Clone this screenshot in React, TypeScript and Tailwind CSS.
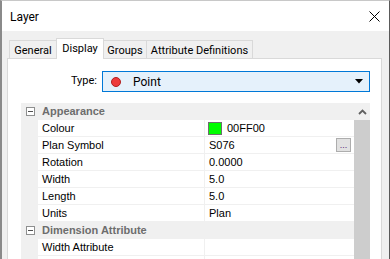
import React from 'react';

type Row =
    | { kind: 'header'; label: string }
    | { kind: 'prop'; label: string; value?: string; swatch?: string; button?: boolean };

const rows: Row[] = [
    { kind: 'header', label: 'Appearance' },
    { kind: 'prop', label: 'Colour', value: '00FF00', swatch: '#00ff00' },
    { kind: 'prop', label: 'Plan Symbol', value: 'S076', button: true },
    { kind: 'prop', label: 'Rotation', value: '0.0000' },
    { kind: 'prop', label: 'Width', value: '5.0' },
    { kind: 'prop', label: 'Length', value: '5.0' },
    { kind: 'prop', label: 'Units', value: 'Plan' },
    { kind: 'header', label: 'Dimension Attribute' },
    { kind: 'prop', label: 'Width Attribute' },
    { kind: 'prop', label: '' },
];

const tabs = [
    { name: 'General', w: 'w-[48px]' },
    { name: 'Display', w: 'w-[48px]' },
    { name: 'Groups', w: 'w-[44px]' },
    { name: 'Attribute Definitions', w: 'w-[107px]' },
];

const MinusBox: React.FC = () => (
    <div className="w-[9px] h-[9px] border border-[#8e8f8f] bg-white flex items-center justify-center">
        <div className="w-[5px] h-px bg-[#505050]" />
    </div>
);

const PropertyGrid: React.FC = () => (
    <div className="flex ml-[13px] mt-[11px] w-[349px]">
        <div className="w-[333px] flex flex-col">
            {rows.map((row, i) =>
                row.kind === 'header' ? (
                    <div key={i} className="h-[17px] flex items-center bg-[#f0f0f0]">
                        <div className="w-[17px] pl-[5px] flex items-center">
                            <MinusBox />
                        </div>
                        <span className="pl-[4px] text-[11px] font-bold text-[#6d6d6d] font-['Liberation_Sans',sans-serif]">
                            {row.label}
                        </span>
                    </div>
                ) : (
                    <div key={i} className="h-[17px] flex">
                        <div className="w-[17px] bg-[#f0f0f0]" />
                        <div className="w-[167px] border-b border-r border-[#f0f0f0] pl-[4px] flex items-center bg-white">
                            <span className="text-[11px] text-black font-['Liberation_Sans',sans-serif]">{row.label}</span>
                        </div>
                        <div className="flex-1 border-b border-[#f0f0f0] pl-[3px] pr-[3px] flex items-center bg-white">
                            {row.swatch && (
                                <div
                                    className="w-[14px] h-[13px] border border-[#6e6e6e] mr-[5px]"
                                    style={{ backgroundColor: row.swatch }}
                                />
                            )}
                            <span className={`text-[11px] text-black font-['Liberation_Sans',sans-serif] ${row.swatch ? '' : 'pl-[1px]'}`}>
                                {row.value}
                            </span>
                            {row.button && (
                                <div className="ml-auto w-[15px] h-[14px] border border-[#adadad] bg-[#e1e1e1] flex items-end justify-center pb-[1px]">
                                    <span className="text-[9px] leading-[9px] text-[#5a2a7a] font-['Liberation_Sans',sans-serif]">...</span>
                                </div>
                            )}
                        </div>
                    </div>
                )
            )}
        </div>
        <div className="w-[16px] flex flex-col">
            <div className="h-[17px] bg-[#f0f0f0] flex items-center justify-center">
                <svg width="9" height="6" viewBox="0 0 9 6">
                    <path d="M1 5 L4.5 1.5 L8 5" stroke="#606060" strokeWidth="1.8" fill="none" />
                </svg>
            </div>
            <div className="flex-1 bg-[#cdcdcd]" />
        </div>
    </div>
);

const App: React.FC = () => {
    return (
        <div className="w-[390px] h-[259px] overflow-hidden bg-[#f0f0f0] border-t border-t-[#c8c8c8] border-l-2 border-l-[#8a8a8a] border-r border-r-[#5a5a5a] font-['Roboto',sans-serif] flex flex-col">
            {/* title bar */}
            <div className="h-[30px] shrink-0 bg-white flex items-center justify-between pl-[8px] pr-[8px]">
                <span className="text-[12px] text-black pt-[1px]">Layer</span>
                <svg width="11" height="11" viewBox="0 0 11 11" className="mr-[1px]">
                    <path d="M0.5 0.5 L10.5 10.5 M10.5 0.5 L0.5 10.5" stroke="#000" strokeWidth="1" />
                </svg>
            </div>

            <div className="flex-1 pt-[7px] pl-[5px] pr-[7px]">
                {/* tabs */}
                <div className="flex items-end h-[20px] pl-[2px] relative z-10">
                    {tabs.map((t) => {
                        const active = t.name === 'Display';
                        return (
                            <div
                                key={t.name}
                                className={
                                    active
                                        ? `${t.w} h-[21px] -mb-px -ml-px bg-white border-t border-l border-r border-[#d9d9d9] flex justify-center pt-[2px] text-[11px] text-black`
                                        : `${t.w} h-[18px] -ml-px first:ml-0 bg-[#f0f0f0] border-t border-l border-r border-[#d9d9d9] flex justify-center pt-[2px] text-[11px] text-black`
                                }
                            >
                                {t.name}
                            </div>
                        );
                    })}
                </div>

                {/* tab panel */}
                <div className="h-[300px] bg-white border border-[#d9d9d9]">
                    <div className="pt-[12px] flex items-center">
                        <div className="w-[89px] text-right text-[11px] text-black">Type:</div>
                        <div className="ml-[5px] w-[268px] h-[21px] bg-[#e5f1fb] border border-[#0078d7] flex items-center pl-[8px] pr-[6px]">
                            <div className="w-[10px] h-[10px] rounded-full bg-[#ee3b3b] border border-[#b02020]" />
                            <span className="ml-[12px] text-[12px] text-black">Point</span>
                            <svg width="8" height="5" viewBox="0 0 8 5" className="ml-auto">
                                <path d="M0 0 L8 0 L4 4.5 Z" fill="#000" />
                            </svg>
                        </div>
                    </div>
                    <PropertyGrid />
                </div>
            </div>
        </div>
    );
};

export default App;
